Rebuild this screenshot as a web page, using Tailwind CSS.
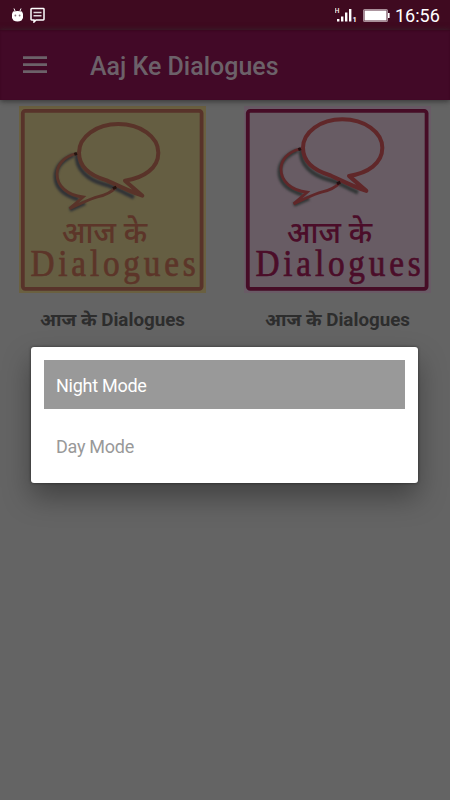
<!DOCTYPE html>
<html lang="en">
<head>
<meta charset="utf-8">
<title>Aaj Ke Dialogues</title>
<script src="https://cdn.jsdelivr.net/npm/@tailwindcss/browser@4"></script>
</head>
<body class="w-[450px] h-[800px] overflow-hidden bg-[#646464] font-[Roboto,'Noto_Sans',sans-serif] relative flex flex-col">
<svg class="hidden">
  <defs>
    <filter id="soft" x="-20%" y="-20%" width="140%" height="140%"><feGaussianBlur stdDeviation="2.500"/></filter>
    <path id="big" d="M345 242C402 234 445 204 445 158C445 110 391 72 325 72C260 72 207 110 207 158C207 202 242 227 290 241C322 256 360 275 397 287Z"/>
    <path id="small" d="M198 161C160 171 141 195 141 222C141 258 172 286 219 291L179 326C215 310 240 296 265 290C285 286 305 276 318 262"/>
    <path id="shade" d="M190 166C158 180 137 198 137 230C137 262 162 285 206 298M179 329L225 309M201 160C196 208 235 241 284 253C315 260 340 278 372 292"/>
  </defs>
</svg>

<header class="h-[30px] shrink-0 bg-[#3f0a20] flex items-center text-white">
  <svg class="ml-[11px] w-[13px] h-[15px] shrink-0" viewBox="0 0 13 15">
    <path d="M3 0.5L4 3M10 .5L9 3" stroke="#fff" stroke-width="1"/>
    <path d="M2 3.500Q6.500 2.500 11 3.500L12 6V10L10.500 12.500Q6.500 14.500 2.500 12.500L1 10V6Z" fill="#fff"/>
    <circle cx="4.400" cy="7.500" r=".9" fill="#877079"/><circle cx="8.600" cy="7.500" r=".9" fill="#877079"/>
  </svg>
  <svg class="ml-[6px] w-[15px] h-[16px] shrink-0" viewBox="0 0 15 16" fill="none" stroke="#fff">
    <path d="M1.700 1.500H13.300Q14 1.500 14 2.200V12.300Q14 13 13.300 13H6L4 15V13H1.700Q1 13 1 12.300V2.200Q1 1.500 1.700 1.500Z" stroke-width="1.500"/>
    <path d="M3.500 5.500H11.500M3.500 8.800H11.500" stroke-width="1.500" stroke="#e0d8dc"/>
  </svg>
  <svg class="ml-[290px] w-[22px] h-[16px] shrink-0" viewBox="0 0 22 16" fill="#fff">
    <text x="-.3" y="5.600" font-size="6.500" font-family="Roboto" font-weight="500">H</text>
    <path d="M2 12h2.400v2.500h-2.400zM6 9.500h2.400v5H6zM10 5.500h2.400V14.500H10zM14 2h2.400v12.500H14z"/>
    <text x="17.500" y="14.500" font-size="7.500" font-family="Roboto" font-weight="700">1</text>
  </svg>
  <svg class="ml-[6px] w-[27px] h-[13px] shrink-0" viewBox="0 0 27 13">
    <rect x=".6" y=".6" width="23.800" height="11.800" rx="1" fill="none" stroke="#a98f99" stroke-width="1.100"/>
    <rect x="1.500" y="1.500" width="22" height="10" fill="#fff"/><rect x="25" y="4" width="1.600" height="5" fill="#fff"/>
  </svg>
  <span class="ml-[5px] mt-[2px] text-[18px] leading-none whitespace-nowrap">16:56</span>
</header>

<nav class="h-[70px] shrink-0 bg-[#420927] flex items-center relative shadow-[0_1px_6px_#303030] inset-shadow-[0_1px_2px_#39071f]">
  <svg class="ml-[23px] w-[24px] h-[18px]" viewBox="0 0 24 18" fill="#6c6169"><path d="M0 .3h24v2.600H0zM0 7.300h24v2.600H0zM0 14.300h24v2.600H0z"/></svg>
  <h1 class="ml-[43px] mt-[3px] text-[25px] leading-none font-medium text-[#6c6169] whitespace-nowrap"><svg class="w-[190px] h-[30px] overflow-visible" fill="currentColor"><text x="0" y="23" textLength="188.500" lengthAdjust="spacingAndGlyphs">Aaj Ke Dialogues</text></svg></h1>
</nav>

<main class="grid grid-cols-2 pt-[6px]">
  <article class="flex flex-col items-center w-[225px]">
    <svg class="w-[187px] h-[187px]" viewBox="0 0 187 187">
      <rect width="187" height="187" fill="#6a6040"/>
      <rect x="3.800" y="4.800" width="178.800" height="178" rx="2.500" fill="#655e42" stroke="#58332a" stroke-width="3.800"/>
      <g transform="translate(-9 -6) scale(.33333)" fill="none">
        <use href="#shade" stroke="#303236" stroke-width="13" filter="url(#soft)"/>
        <use href="#small" stroke="#593329" stroke-width="8.500"/>
        <use href="#big" fill="#655e42" stroke="#593329" stroke-width="12" stroke-linejoin="round"/>
        <path d="M193 163l8-3M309 266l10-5" stroke="#24130f" stroke-width="9"/>
      </g>
      <g fill="#5c3529" stroke="#5c3529">
        <text transform="translate(43 136.500) scale(1 1.080)" font-family="'Noto Sans',sans-serif" font-size="28" font-weight="500" stroke-width=".1" textLength="85" lengthAdjust="spacingAndGlyphs">आज के</text>
        <text transform="translate(11.500 170) scale(.9 1)" font-family="'Liberation Serif',serif" font-size="37" stroke-width=".7" letter-spacing="4.200">Dialogues</text>
      </g>
    </svg>
    <h2 class="mt-[14px] h-[26px] text-[18px] leading-[26px] font-bold text-[#2d2d2d]"><svg class="w-[146px] h-[26px] overflow-visible" fill="currentColor"><text x="0" y="19" textLength="145" lengthAdjust="spacingAndGlyphs">आज के Dialogues</text></svg></h2>
  </article>
  <article class="flex flex-col items-center w-[225px]">
    <svg class="w-[187px] h-[187px]" viewBox="0 0 187 187">
      <rect width="187" height="187" fill="#695b66"/>
      <rect x="3.800" y="4.800" width="178.800" height="178" rx="2.500" fill="#685c64" stroke="#460c26" stroke-width="3.800"/>
      <g transform="translate(-10 -10.800) scale(.33333)" fill="none">
        <use href="#shade" stroke="#323636" stroke-width="13" filter="url(#soft)"/>
        <use href="#small" stroke="#602729" stroke-width="8.500"/>
        <use href="#big" fill="#685c64" stroke="#602729" stroke-width="12" stroke-linejoin="round"/>
        <path d="M193 163l8-3M309 266l10-5" stroke="#240f11" stroke-width="9"/>
      </g>
      <g fill="#4b0d29" stroke="#4b0d29">
        <text transform="translate(43 136.500) scale(1 1.080)" font-family="'Noto Sans',sans-serif" font-size="28" font-weight="500" stroke-width=".1" textLength="85" lengthAdjust="spacingAndGlyphs">आज के</text>
        <text transform="translate(11.500 170) scale(.9 1)" font-family="'Liberation Serif',serif" font-size="37" stroke-width=".7" letter-spacing="4.200">Dialogues</text>
      </g>
    </svg>
    <h2 class="mt-[14px] h-[26px] text-[18px] leading-[26px] font-bold text-[#2d2d2d]"><svg class="w-[146px] h-[26px] overflow-visible" fill="currentColor"><text x="0" y="19" textLength="145" lengthAdjust="spacingAndGlyphs">आज के Dialogues</text></svg></h2>
  </article>
</main>

<div role="dialog" class="absolute left-[31px] top-[347px] w-[387px] h-[136px] rounded-[3px] bg-white p-[13px] shadow-[0_14px_28px_#00000058,0_0_3px_#00000080] flex flex-col text-[18px] tracking-[-0.27px]">
  <button class="h-[49px] shrink-0 bg-[#999] text-white text-left pl-[12px] pt-[2px]">Night Mode</button>
  <button class="h-[49px] mt-[12px] shrink-0 text-[#999] text-left pl-[12px] pt-[2px]">Day Mode</button>
</div>
</body>
</html>
